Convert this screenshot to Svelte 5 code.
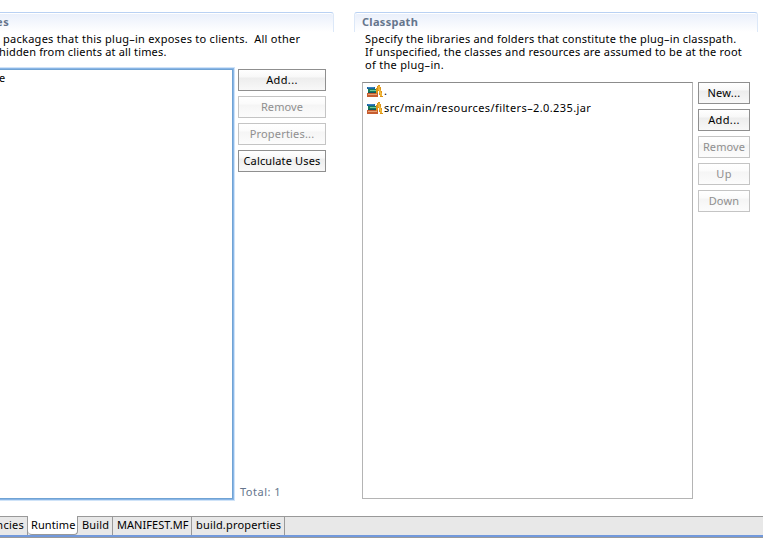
<script>
  const leftButtons = [
    { label: 'Add...', ls: 0.35 },
    { label: 'Remove', off: true, ls: 0.1 },
    { label: 'Properties...', off: true, ls: 0.18 },
    { label: 'Calculate Uses', ls: 0.16 },
  ];
  const rightButtons = [
    { label: 'New...', ls: 0.3 },
    { label: 'Add...', ls: 0.35 },
    { label: 'Remove', off: true, ls: 0.1 },
    { label: 'Up', off: true, ls: 0.3 },
    { label: 'Down', off: true, ls: 0.2 },
  ];
  const jars = ['.', 'src/main/resources/filters–2.0.235.jar'];
  const tabs = [
    { label: 'Dependencies', width: 28, ls: 0.25, cut: true },
    { label: 'Runtime', width: 50, ls: 0.1, active: true },
    { label: 'Build', width: 35, ls: 0.17 },
    { label: 'MANIFEST.MF', width: 79, ls: 0.05 },
    { label: 'build.properties', width: 93, ls: 0.17 },
  ];
</script>

{#snippet buttons(list)}
  <div class="buttons">
    {#each list as b}
      <button class:off={b.off} disabled={b.off} style:letter-spacing="{b.ls}px">{b.label}</button>
    {/each}
  </div>
{/snippet}

<div class="page">
  <main>
    <section class="left">
      <header><h2>es</h2></header>
      <div class="desc">
        <p class="l1">packages that this plug–in exposes to clients.&nbsp; All other</p>
        <p class="l2">hidden from clients at all times.</p>
      </div>
      <div class="body">
        <div class="list"><span>e</span></div>
        <div class="side">
          {@render buttons(leftButtons)}
          <div class="total">Total: 1</div>
        </div>
      </div>
    </section>

    <section class="right">
      <header><h2>Classpath</h2></header>
      <div class="desc">
        <p class="r1">Specify the libraries and folders that constitute the plug–in classpath.</p>
        <p class="r2">If unspecified, the classes and resources are assumed to be at the root</p>
        <p class="r3">of the plug–in.</p>
      </div>
      <div class="body">
        <div class="list">
          {#each jars as jar}
            <div class="item">
              <svg width="16" height="15" viewBox="0 0 16 15" shape-rendering="crispEdges">
                <path d="M0 3h8v2H0z" fill="#1b64a3" /><path d="M1 3h6v1H1z" fill="#3684bd" />
                <path d="M1 5h9v4H1z" fill="#167c59" /><path d="M3 6h6v1H3z" fill="#74c89c" />
                <path d="M1 8h9v1H1z" fill="#14565c" />
                <path d="M0 9h11v4H0z" fill="#c65d30" /><path d="M1 10h9v1H1z" fill="#e8a074" />
                <g shape-rendering="auto">
                  <path d="M9 4h1V2h1V1h2v2h1v4h1v5h1v1h-3v-2h-1V7h-1v2h-1v1H9z" fill="#dc9418" />
                  <path d="M12 2v4h1v3h1v3" stroke="#ffcf50" stroke-width="1" fill="none" />
                </g>
              </svg>
              <span>{jar}</span>
            </div>
          {/each}
        </div>
        {@render buttons(rightButtons)}
      </div>
    </section>
  </main>

  <nav>
    {#each tabs as t}
      <div class="tab" class:active={t.active} class:cut={t.cut} style:width="{t.width}px" style:letter-spacing="{t.ls}px"><span>{t.label}</span></div>
    {/each}
  </nav>
</div>

<style>
  .page {
    width: 763px;
    height: 538px;
    overflow: hidden;
    box-sizing: border-box;
    display: flex;
    flex-direction: column;
    background: #fff;
    color: #000;
    font: 11px/13px "Noto Sans", "Open Sans", sans-serif;
    letter-spacing: 0.3px;
    border-bottom: 1px solid #9a9a9a;
  }
  main { height: 516px; flex: none; display: flex; gap: 20px; padding-top: 12px; box-sizing: border-box; }
  section { display: flex; flex-direction: column; height: 487px; }
  .left { width: 334px; }
  .right { width: 404px; }
  header {
    height: 20px;
    box-sizing: border-box;
    border: 1px solid #b9d1f3;
    border-bottom: 0;
    border-left-color: #dce8f8;
    border-right-color: #dce8f8;
    border-radius: 3px 3px 0 0;
    background: linear-gradient(#e9effb, #fff);
    box-shadow: inset 0 1px #fff;
    padding: 2px 0 0 7px;
  }
  .left header { border-left: 0; border-top-left-radius: 0; padding-left: 0; }
  h2 { margin: 0; font-size: 11px; line-height: 13px; font-weight: 700; color: #65758c; }
  .left h2 { margin-left: -4px; letter-spacing: 0.6px; }
  .desc p { margin: 0; white-space: pre; }
  .left .desc { height: 36px; padding-left: 3px; }
  .l1 { letter-spacing: 0.27px; }
  .desc .l2 { margin-left: -4px; letter-spacing: 0.16px; }
  .r1 { letter-spacing: 0.21px; }
  .r2 { letter-spacing: 0.19px; }
  .right .desc { height: 50px; padding-left: 11px; }
  .body { flex: 1; display: flex; min-height: 0; }
  .list { box-sizing: border-box; background: #fff; }
  .right .list { width: 331px; margin: 0 5px 0 8px; border: 1px solid #b4b4b4; border-top-color: #8c8c8c; }
  .left .list {
    width: 233px;
    height: 430px;
    margin: 1px 5px 0 0;
    border: 1px solid #70a3d4;
    border-left: 0;
    box-shadow: 0 0 0 1px #8ab6e6, 0 0 0 2px #cfe3f8;
    padding-top: 1px;
  }
  .left .list span { margin-left: -1px; }
  .item { height: 17px; display: flex; align-items: center; padding-left: 4px; }
  .item svg { flex: none; }
  .item span { margin: -2px 0 0 1px; white-space: pre; letter-spacing: 0.39px; }
  .buttons { display: flex; flex-direction: column; gap: 5px; }
  button {
    height: 22px;
    box-sizing: border-box;
    border: 1px solid #8f8f8f;
    border-radius: 0;
    margin: 0;
    padding: 0 0 1px;
    color: #000;
    font: inherit;
    line-height: 13px;
    white-space: nowrap;
    background: linear-gradient(#fff 0, #f8f8f8 35%, #ededed 40%, #f8f8f8 100%);
  }
  button.off {
    color: #8f8f8f;
    border-color: #c4c4c4;
    background: linear-gradient(#fff 0, #fbfbfb 35%, #f5f5f5 40%, #fcfcfc 100%);
  }
  .left button { width: 88px; }
  .right button { width: 52px; }
  .side { display: flex; flex-direction: column; justify-content: space-between; padding: 1px 0; }
  .total { color: #65758c; padding-left: 2px; letter-spacing: 0.5px; }
  nav {
    height: 21px;
    flex: none;
    box-sizing: border-box;
    border-top: 1px solid #999;
    border-bottom: 2px solid #7299dc;
    background: #e8e8e8;
    display: flex;
  }
  .tab {
    height: 18px;
    box-sizing: border-box;
    border-right: 1px solid #999;
    padding: 0 2px 2px 4px;
    white-space: nowrap;
    overflow: hidden;
    line-height: 16px;
  }
  .tab.cut { display: flex; justify-content: flex-end; padding-right: 3px; }
  .tab.active {
    margin-top: -1px;
    height: 19px;
    padding: 1px 0 0 3px;
    background: #fff;
    border-bottom: 1px solid #999;
    border-radius: 0 0 4px 4px;
  }
</style>
